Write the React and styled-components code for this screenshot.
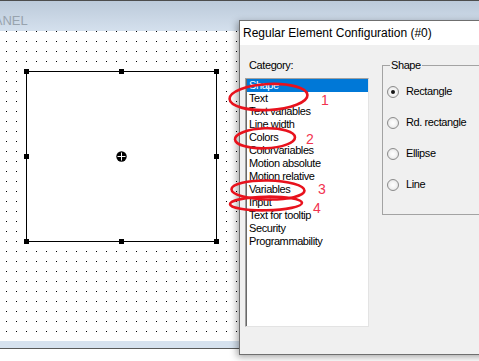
import React from 'react';
import styled, { createGlobalStyle } from 'styled-components';

const CATEGORIES = [
    'Shape',
    'Text',
    'Text variables',
    'Line width',
    'Colors',
    'Colorvariables',
    'Motion absolute',
    'Motion relative',
    'Variables',
    'Input',
    'Text for tooltip',
    'Security',
    'Programmability'
];

const SHAPES = ['Rectangle', 'Rd. rectangle', 'Ellipse', 'Line'];

// handle offsets inside the selection box (padding box coords)
const HANDLES = [
    [-3, -3], [92, -3], [187, -3],
    [-3, 82], [187, 82],
    [-3, 167], [92, 167], [187, 167]
];

const MARKS = [
    { cx: 268.5, cy: 97, rx: 39, ry: 13, rot: -3, label: '1', x: 321, y: 105 },
    { cx: 265, cy: 138.3, rx: 30, ry: 10, rot: -2, label: '2', x: 306, y: 143.5 },
    { cx: 268, cy: 190, rx: 36.5, ry: 9.5, rot: 1, label: '3', x: 318, y: 194 },
    { cx: 266, cy: 203.5, rx: 36, ry: 6.8, rot: -1, label: '4', x: 313, y: 213 }
];

const GlobalStyle = createGlobalStyle`
    html, body {
        margin: 0;
        padding: 0;
        background: #fff;
    }
`;

const App = () => {
    return (
        <>
            <GlobalStyle />
            <Page>
                <Designer>
                    <PanelHeader>PANEL</PanelHeader>
                    <Grid>
                        <Selection>
                            {HANDLES.map(([l, t], i) => (
                                <Handle key={i} $left={l} $top={t} />
                            ))}
                            <Center width="11" height="11" viewBox="0 0 11 11">
                                <circle cx="5.5" cy="5.5" r="5.2" fill="#000" />
                                <rect x="5" y="1.5" width="1" height="8" fill="#fff" />
                                <rect x="1.5" y="5" width="8" height="1" fill="#fff" />
                            </Center>
                        </Selection>
                    </Grid>
                    <PanelFooter />
                </Designer>

                <Dialog>
                    <TitleBar>Regular Element Configuration (#0)</TitleBar>
                    <DialogBody>
                        <CategoryColumn>
                            <FieldLabel>Category:</FieldLabel>
                            <ListBox>
                                {CATEGORIES.map((c, i) => (
                                    <ListItem key={c} $selected={i === 0}>{c}</ListItem>
                                ))}
                            </ListBox>
                        </CategoryColumn>
                        <GroupBox>
                            <Legend>Shape</Legend>
                            {SHAPES.map((s, i) => (
                                <RadioRow key={s}>
                                    <Radio $checked={i === 0} />
                                    <RadioLabel>{s}</RadioLabel>
                                </RadioRow>
                            ))}
                        </GroupBox>
                    </DialogBody>
                </Dialog>

                <Annotations width="479" height="361" viewBox="0 0 479 361">
                    {MARKS.map((m) => (
                        <g key={m.label}>
                            <ellipse
                                cx={m.cx}
                                cy={m.cy}
                                rx={m.rx}
                                ry={m.ry}
                                transform={`rotate(${m.rot} ${m.cx} ${m.cy})`}
                                fill="none"
                                stroke="#e8121d"
                                strokeWidth="2.6"
                            />
                            <text x={m.x} y={m.y} fill="#f2334f" fontSize="14" fontFamily="Liberation Sans, Arial, sans-serif">
                                {m.label}
                            </text>
                        </g>
                    ))}
                </Annotations>
            </Page>
        </>
    );
};

const Page = styled.div`
    position: relative;
    width: 479px;
    height: 361px;
    overflow: hidden;
    background: #fff;
    font-family: "Liberation Sans", Arial, sans-serif;
`;

const Designer = styled.div`
    display: flex;
    flex-direction: column;
    height: 349px;
    box-sizing: border-box;
    border-top: 1px solid #4d4d4d;
    border-bottom: 1px solid #5a5a5a;
`;

const PanelHeader = styled.div`
    height: 30px;
    box-sizing: border-box;
    padding-top: 13px;
    background: linear-gradient(#bccada, #d4e0ed);
    color: #98a3ae;
    font-size: 13px;
    line-height: 13px;
    text-indent: -14px;
    white-space: nowrap;
`;

const Grid = styled.div`
    flex: 1;
    padding: 40px 0 0 26px;
    background-color: #fff;
    background-image: conic-gradient(from 270deg at 1px 1px, #000 90deg, transparent 0);
    background-size: 10px 10px;
    background-position: 6px 0;
`;

const Selection = styled.div`
    position: relative;
    width: 191px;
    height: 171px;
    box-sizing: border-box;
    border: 1px solid #000;
    background: #fff;
`;

const Handle = styled.div`
    position: absolute;
    left: ${({ $left }) => $left}px;
    top: ${({ $top }) => $top}px;
    width: 5px;
    height: 5px;
    background: #000;
`;

const Center = styled.svg`
    position: absolute;
    left: 89px;
    top: 79px;
`;

const PanelFooter = styled.div`
    height: 7px;
    background: #d6e2ef;
`;

const Dialog = styled.div`
    position: absolute;
    left: 239px;
    top: 20px;
    width: 262px;
    height: 335px;
    box-sizing: border-box;
    border: 1px solid #6f6f6f;
    background: #f0f0f0;
    box-shadow: -2px 2px 7px rgba(0, 0, 0, 0.35);
`;

const TitleBar = styled.div`
    height: 24px;
    padding-left: 3px;
    background: #fff;
    color: #000;
    font-size: 12px;
    line-height: 24px;
    white-space: nowrap;
`;

const DialogBody = styled.div`
    display: flex;
    align-items: flex-start;
    gap: 13px;
    padding: 14px 0 0 5px;
`;

const CategoryColumn = styled.div`
    display: flex;
    flex-direction: column;
    width: 124px;
`;

const FieldLabel = styled.div`
    padding-left: 4px;
    margin-bottom: 6px;
    font-size: 11px;
    line-height: 13px;
    letter-spacing: -0.4px;
    color: #000;
`;

const ListBox = styled.div`
    width: 124px;
    height: 249px;
    box-sizing: border-box;
    padding-left: 1px;
    background: #fff;
    border: 1px solid;
    border-color: #a0a0a0 #e3e3e3 #e3e3e3 #a0a0a0;
    box-shadow: inset 1px 1px 0 #696969;
`;

const ListItem = styled.div`
    height: 13px;
    padding-left: 2px;
    font-size: 11px;
    line-height: 13px;
    letter-spacing: -0.4px;
    white-space: nowrap;
    background: ${({ $selected }) => ($selected ? '#0078d7' : 'transparent')};
    color: ${({ $selected }) => ($selected ? '#fff' : '#000')};
`;

const GroupBox = styled.fieldset`
    margin: 0;
    width: 120px;
    min-width: 0;
    height: 156px;
    box-sizing: border-box;
    padding: 4px 0 0 4px;
    border: 1px solid #a3a3a3;
`;

const Legend = styled.legend`
    margin-left: 3px;
    padding: 0 1px;
    font-size: 11px;
    line-height: 13px;
    letter-spacing: -0.4px;
    color: #000;
`;

const RadioRow = styled.div`
    display: flex;
    align-items: center;
    gap: 7px;
    height: 31px;
`;

const Radio = styled.span`
    position: relative;
    flex: none;
    width: 12px;
    height: 12px;
    box-sizing: border-box;
    border-radius: 50%;
    border: 1px solid #8b8b8b;
    background: radial-gradient(circle at 50% 50%, #fff 0, #f4f4f4 45%, #d8d8d8 100%);

    &::after {
        content: '';
        display: ${({ $checked }) => ($checked ? 'block' : 'none')};
        position: absolute;
        left: 3px;
        top: 3px;
        width: 4px;
        height: 4px;
        border-radius: 50%;
        background: #151515;
    }
`;

const RadioLabel = styled.span`
    font-size: 11px;
    line-height: 13px;
    letter-spacing: -0.4px;
    white-space: nowrap;
    color: #000;
`;

const Annotations = styled.svg`
    position: absolute;
    left: 0;
    top: 0;
    pointer-events: none;
`;

export default App;
